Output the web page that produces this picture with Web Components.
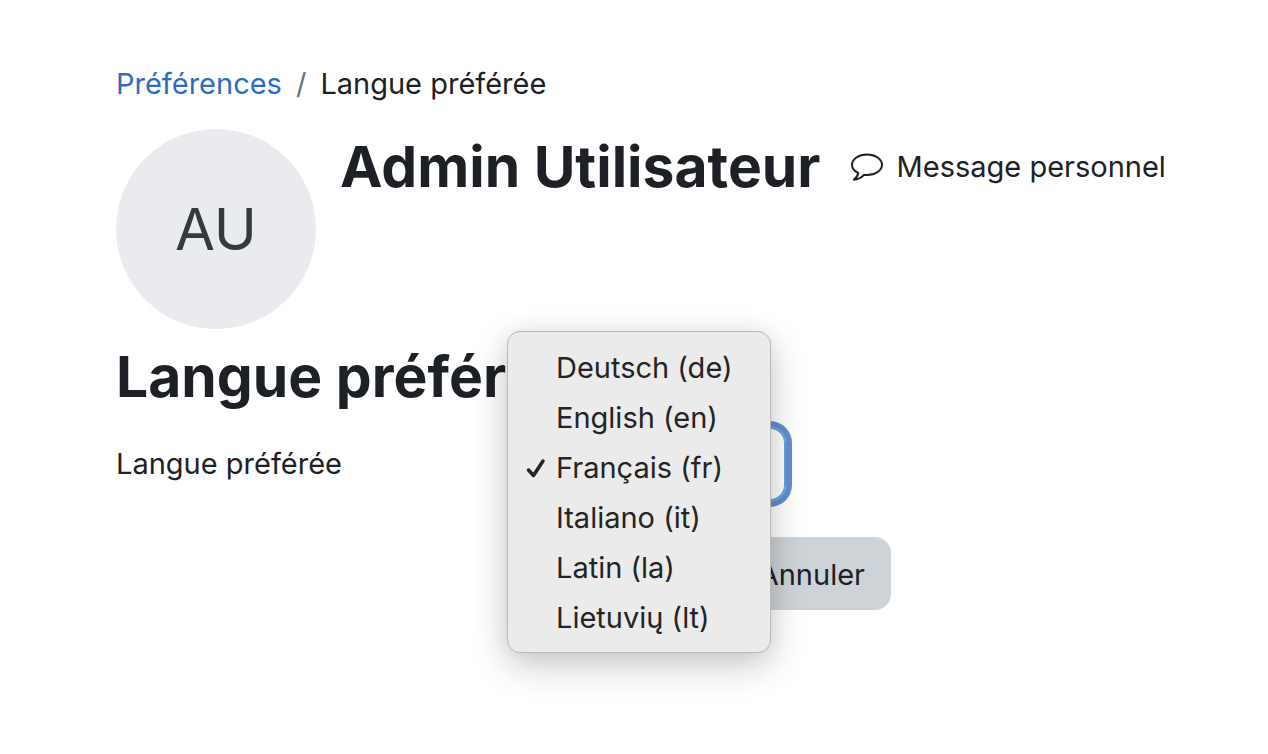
<!DOCTYPE html>
<html lang="fr">
<head>
<meta charset="utf-8">
<title>Langue préférée</title>
<style>
  body { margin: 0; min-height: 100vh; background: #fff; color: #1d2125; font: 29px/44px Inter, "Liberation Sans", sans-serif; }
</style>
</head>
<body>
<preferences-page>
  <bread-crumb slot="nav" parent="Préférences" current="Langue préférée"></bread-crumb>
  <user-header slot="header" name="Admin Utilisateur" initials="AU"></user-header>
  <language-form></language-form>
</preferences-page>

<script>
class PreferencesPage extends HTMLElement {
  constructor() {
    super();
    this.attachShadow({ mode: "open" }).innerHTML = `
      <style>
        :host { display: block; box-sizing: border-box; min-height: 100vh; padding: 62px 100px 60px 116px; }
        main { display: flex; flex-direction: column; }
      </style>
      <main><slot name="nav"></slot><slot name="header"></slot><slot></slot></main>`;
  }
}

class BreadCrumb extends HTMLElement {
  connectedCallback() {
    if (this.shadowRoot) return;
    this.attachShadow({ mode: "open" }).innerHTML = `
      <style>
        :host { display: block; }
        ol { display: flex; gap: 14px; margin: 0; padding: 0; list-style: none; }
        a { color: #2f6bbf; text-decoration: none; }
        .sep { color: #6a737b; }
      </style>
      <nav aria-label="Fil d’Ariane"><ol>
        <li><a href="#">${this.getAttribute("parent")}</a></li>
        <li class="sep" aria-hidden="true">/</li>
        <li aria-current="page">${this.getAttribute("current")}</li>
      </ol></nav>`;
  }
}

class UserHeader extends HTMLElement {
  connectedCallback() {
    if (this.shadowRoot) return;
    this.attachShadow({ mode: "open" }).innerHTML = `
      <style>
        :host { display: flex; align-items: flex-start; gap: 24px; margin-top: 23px; }
        .avatar { flex: none; display: grid; place-items: center; width: 200px; height: 200px;
          border-radius: 50%; background: #e9ebef; color: #343a40; font-size: 58px; line-height: 72px; }
        .title { display: flex; align-items: center; gap: 30px; padding-top: 2px; }
        h1 { margin: 0; font-size: 57px; line-height: 72px; font-weight: 700; white-space: nowrap; }
        a { display: flex; align-items: center; gap: 14px; color: inherit; text-decoration: none; white-space: nowrap; }
        svg { width: 32px; height: 28px; flex: none; }
      </style>
      <div class="avatar">${this.getAttribute("initials")}</div>
      <div class="title">
        <h1>${this.getAttribute("name")}</h1>
        <a href="#">
          <svg viewBox="0 0 32 28" fill="none" stroke="currentColor" stroke-width="2" stroke-linejoin="round" aria-hidden="true">
            <path d="M16 1.500C7.700 1.500 1 6 1 11.800c0 3.500 2.400 6.400 6.300 8.200-.5 2.700-2 4.800-4.500 6.700 4.400-.4 7.800-2.200 10.200-4.900 1 .2 2 .2 3 .2 8.300 0 15-4.600 15-10.200S24.300 1.500 16 1.500Z"/>
          </svg>
          <span>Message personnel</span>
        </a>
      </div>`;
  }
}

class LanguageMenu extends HTMLElement {
  constructor() {
    super();
    this.attachShadow({ mode: "open" }).innerHTML = `
      <style>
        :host { display: block; box-sizing: border-box; padding: 11px 0 9px; border: 1px solid #b9b9b9;
          border-radius: 13px; background: #ebebeb; color: #242424;
          box-shadow: 0 12px 36px rgba(0,0,0,.22), 0 0 20px rgba(0,0,0,.05); }
        ul { margin: 0; padding: 0; list-style: none; }
        li { display: grid; grid-template-columns: 20px 1fr; gap: 10px; align-items: center;
          padding-left: 18px; line-height: 50px; font-size: 29px; white-space: nowrap; }
        li span { grid-column: 2; grid-row: 1; }
        svg { width: 20px; height: 20px; grid-row: 1; }
      </style>
      <ul role="listbox" aria-label="Langue préférée"></ul>`;
  }
  set languages(list) {
    this.shadowRoot.querySelector("ul").innerHTML = list.map(([code, label]) => {
      const on = code === "fr";
      const tick = on ? `<svg viewBox="0 0 20 20" fill="none" stroke="currentColor" stroke-width="3.500" stroke-linecap="round" stroke-linejoin="round" aria-hidden="true"><path d="M2.500 12 7.500 17.500 17 3"/></svg>` : "";
      return `<li role="option" aria-selected="${on}">${tick}<span>${label}</span></li>`;
    }).join("");
  }
}

class LanguageForm extends HTMLElement {
  connectedCallback() {
    if (this.shadowRoot) return;
    const languages = [["de", "Deutsch (de)"], ["en", "English (en)"], ["fr", "Français (fr)"],
      ["it", "Italiano (it)"], ["la", "Latin (la)"], ["lt", "Lietuvių (lt)"]];
    const root = this.attachShadow({ mode: "open" });
    root.innerHTML = `
      <style>
        :host { display: block; margin-top: 12px; }
        h2 { margin: 0 0 14px; font-size: 57px; line-height: 72px; font-weight: 700; }
        form { display: grid; grid-template-columns: 400px 1fr; row-gap: 36px; }
        label { align-self: center; }
        .field { position: relative; justify-self: start; }
        select { display: block; width: 270px; height: 74px; padding: 0 24px; appearance: none;
          border: 2px solid #65a1e4; border-radius: 16px; background: transparent; color: inherit;
          font: inherit; outline: 0; box-shadow: 0 0 0 6px #638fcb; }
        language-menu { position: absolute; z-index: 1; top: -96px; left: -9px; width: 264px; }
        .actions { grid-column: 2; display: flex; width: 375px; justify-content: flex-end; }
        button { height: 73px; padding: 2px 26px 0; border: 0; border-radius: 16px;
          background: #ced3d8; color: inherit; font: inherit; }
      </style>
      <h2>Langue préférée</h2>
      <form>
        <label for="lang">Langue préférée</label>
        <div class="field">
          <select id="lang">${languages.map(([c, l]) => `<option value="${c}"${c === "fr" ? " selected" : ""}>${l}</option>`).join("")}</select>
          <language-menu></language-menu>
        </div>
        <div class="actions"><button type="button">Annuler</button></div>
      </form>`;
    root.querySelector("language-menu").languages = languages;
  }
}

customElements.define("preferences-page", PreferencesPage);
customElements.define("bread-crumb", BreadCrumb);
customElements.define("user-header", UserHeader);
customElements.define("language-menu", LanguageMenu);
customElements.define("language-form", LanguageForm);
</script>
</body>
</html>
